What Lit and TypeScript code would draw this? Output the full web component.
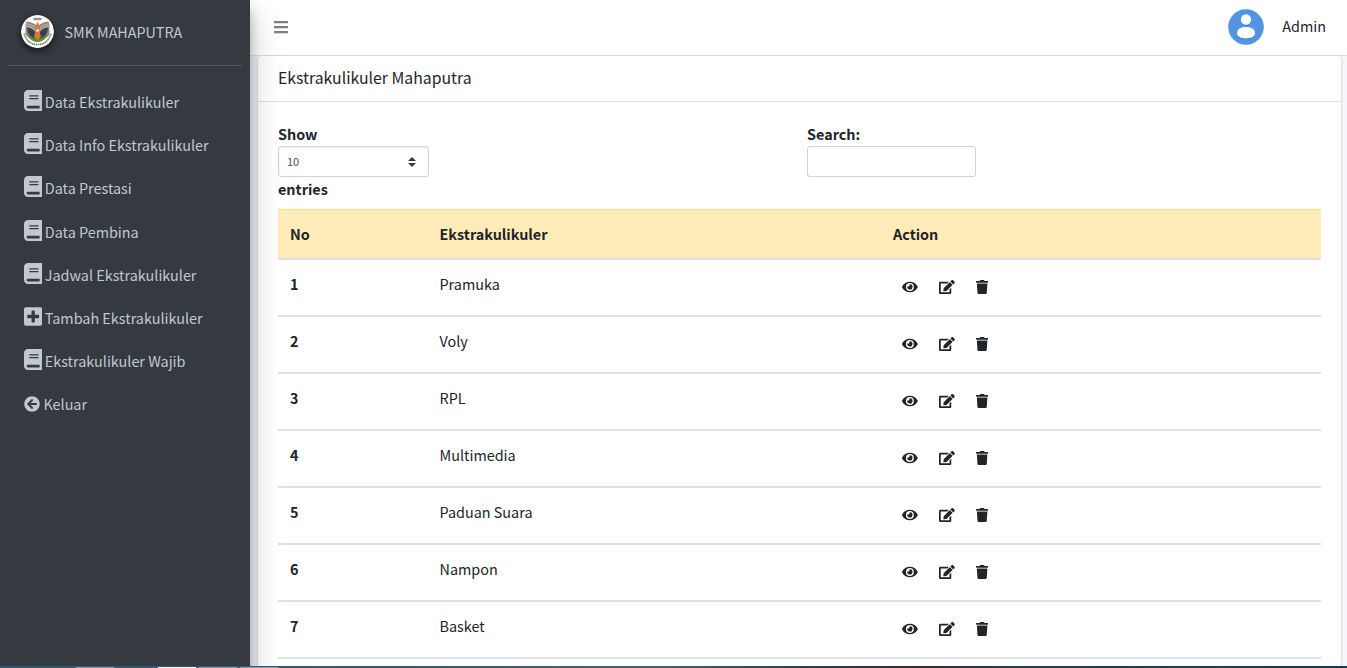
import { LitElement, html, css, svg } from "lit";
import { customElement, property } from "lit/decorators.js";

type Glyph = { w: number; d: string };

const GLYPHS: Record<string, Glyph> = {
  book: { w: 448, d: "M448 360V24c0-13.3-10.7-24-24-24H96C43 0 0 43 0 96v320c0 53 43 96 96 96h328c13.3 0 24-10.7 24-24v-16c0-7.5-3.5-14.3-8.9-18.7-4.2-15.4-4.2-59.3 0-74.7 5.4-4.3 8.9-11.1 8.9-18.6zM128 134c0-3.3 2.7-6 6-6h212c3.3 0 6 2.7 6 6v20c0 3.3-2.7 6-6 6H134c-3.3 0-6-2.7-6-6v-20zm0 64c0-3.3 2.7-6 6-6h212c3.3 0 6 2.7 6 6v20c0 3.3-2.7 6-6 6H134c-3.3 0-6-2.7-6-6v-20zm253.4 250H96c-17.7 0-32-14.3-32-32 0-17.6 14.4-32 32-32h285.4c-1.9 17.1-1.9 46.9 0 64z" },
  plus: { w: 448, d: "M400 32H48C21.5 32 0 53.5 0 80v352c0 26.5 21.5 48 48 48h352c26.5 0 48-21.5 48-48V80c0-26.5-21.5-48-48-48zm-32 252c0 6.6-5.4 12-12 12h-92v92c0 6.6-5.4 12-12 12h-56c-6.6 0-12-5.4-12-12v-92H92c-6.6 0-12-5.4-12-12v-56c0-6.6 5.4-12 12-12h92v-92c0-6.6 5.4-12 12-12h56c6.6 0 12 5.4 12 12v92h92c6.6 0 12 5.4 12 12v56z" },
  back: { w: 512, d: "M256 504C119 504 8 393 8 256S119 8 256 8s248 111 248 248-111 248-248 248zm28.9-143.6L209.4 288H392c13.3 0 24-10.7 24-24v-16c0-13.3-10.7-24-24-24H209.4l75.5-72.4c9.7-9.3 9.9-24.8.4-34.3l-11-10.9c-9.4-9.4-24.6-9.4-33.9 0L107.7 239c-9.4 9.4-9.4 24.6 0 33.9l132.7 132.7c9.4 9.4 24.6 9.4 33.9 0l11-10.9c9.5-9.5 9.3-25-.4-34.3z" },
  bars: { w: 448, d: "M16 132h416c8.8 0 16-7.2 16-16V76c0-8.8-7.2-16-16-16H16C7.2 60 0 67.2 0 76v40c0 8.8 7.2 16 16 16zm0 160h416c8.8 0 16-7.2 16-16v-40c0-8.8-7.2-16-16-16H16c-8.8 0-16 7.2-16 16v40c0 8.8 7.2 16 16 16zm0 160h416c8.8 0 16-7.2 16-16v-40c0-8.8-7.2-16-16-16H16c-8.8 0-16 7.2-16 16v40c0 8.8 7.2 16 16 16z" },
  eye: { w: 576, d: "M572.52 241.4C518.29 135.59 410.93 64 288 64S57.68 135.64 3.48 241.41a32.35 32.35 0 0 0 0 29.19C57.71 376.41 165.07 448 288 448s230.32-71.64 284.52-177.41a32.35 32.35 0 0 0 0-29.19zM288 400a144 144 0 1 1 144-144 143.93 143.93 0 0 1-144 144zm0-240a95.31 95.31 0 0 0-25.31 3.79 47.85 47.85 0 0 1-66.9 66.9A95.78 95.78 0 1 0 288 160z" },
  edit: { w: 576, d: "M402.6 83.2l90.2 90.2c3.8 3.8 3.8 10 0 13.8L274.4 405.6l-92.8 10.3c-12.4 1.4-22.9-9.1-21.5-21.5l10.3-92.8L388.8 83.2c3.8-3.8 10-3.8 13.8 0zm162-22.9l-48.8-48.8c-15.2-15.2-39.9-15.2-55.2 0l-35.4 35.4c-3.8 3.8-3.8 10 0 13.8l90.2 90.2c3.8 3.8 10 3.8 13.8 0l35.4-35.4c15.2-15.3 15.2-40 0-55.2zM384 346.2V448H64V128h229.8c3.2 0 6.2-1.3 8.5-3.5l40-40c7.6-7.6 2.2-20.5-8.5-20.5H48C21.5 64 0 85.5 0 112v352c0 26.5 21.5 48 48 48h352c26.5 0 48-21.5 48-48V306.2c0-10.7-12.9-16-20.5-8.5l-40 40c-2.2 2.3-3.5 5.3-3.5 8.5z" },
  trash: { w: 448, d: "M432 32H312l-9.4-18.7A24 24 0 0 0 281.1 0H166.8a23.72 23.72 0 0 0-21.4 13.3L136 32H16A16 16 0 0 0 0 48v32a16 16 0 0 0 16 16h416a16 16 0 0 0 16-16V48a16 16 0 0 0-16-16zM53.2 467a48 48 0 0 0 47.9 45h245.8a48 48 0 0 0 47.9-45L416 128H32z" },
};

@customElement("fa-icon")
class FaIcon extends LitElement {
  @property() name = "book";
  @property({ type: Number }) size = 16;
  static styles = css`
    :host { display: inline-flex; flex: none; }
    svg { display: block; fill: currentColor; }
  `;
  render() {
    const g = GLYPHS[this.name];
    return html`<svg width=${(this.size * g.w) / 512} height=${this.size} viewBox="0 0 ${g.w} 512">
      ${svg`<path d=${g.d}></path>`}
    </svg>`;
  }
}

const MENU: [string, string][] = [
  ["book", "Data Ekstrakulikuler"],
  ["book", "Data Info Ekstrakulikuler"],
  ["book", "Data Prestasi"],
  ["book", "Data Pembina"],
  ["book", "Jadwal Ekstrakulikuler"],
  ["plus", "Tambah Ekstrakulikuler"],
  ["book", "Ekstrakulikuler Wajib"],
  ["back", "Keluar"],
];

const ROWS = ["Pramuka", "Voly", "RPL", "Multimedia", "Paduan Suara", "Nampon", "Basket"];

@customElement("app-root")
class AppRoot extends LitElement {
  static styles = css`
    :host {
      display: block;
      height: 668px;
      overflow: hidden;
      position: relative;
      font-family: "Source Sans Pro", "Noto Sans CJK JP", "Noto Sans", sans-serif;
      font-size: 14.4px;
      line-height: 24px;
      color: #212529;
      background: #f4f6f9;
    }
    * { box-sizing: border-box; }
    .shell { display: grid; grid-template-columns: 250px 1fr; height: 668px; }
    .side {
      background: #343a40;
      color: #c2c7d0;
      padding: 0 8px;
      z-index: 2;
      box-shadow: 0 14px 28px rgba(0, 0, 0, 0.25), 0 10px 10px rgba(0, 0, 0, 0.22);
    }
    .brand {
      display: flex;
      align-items: center;
      height: 66px;
      padding: 0 0 2px 13px;
      border-bottom: 1px solid #4f5962;
      font-size: 14.3px;
    }
    .logo {
      width: 33px;
      height: 33px;
      border-radius: 50%;
      margin-right: 10.5px;
      box-shadow: 0 3px 6px rgba(0, 0, 0, 0.3), 0 3px 6px rgba(0, 0, 0, 0.3);
    }
    .menu { display: flex; flex-direction: column; padding-top: 15px; }
    .item { display: flex; align-items: center; height: 43.2px; padding-left: 16px; white-space: pre; }
    .item span { padding-bottom: 1px; }
    .item fa-icon { margin: 0 2.4px 4px 0; }
    .item fa-icon.back { margin: 0 3.4px 1px 0; }
    .main { display: flex; flex-direction: column; min-width: 0; }
    .top {
      display: flex;
      align-items: center;
      height: 56px;
      flex: none;
      padding: 0 21px 1px 24px;
      background: #fff;
      border-bottom: 1px solid #dee2e6;
    }
    .top .bars { color: rgba(0, 0, 0, 0.5); }
    .user { display: flex; align-items: center; gap: 18px; margin-left: auto; }
    .user span { padding-bottom: 2px; }
    .card {
      margin: 0 6px 0 8px;
      flex: 1;
      background: #fff;
      border-radius: 4px 4px 0 0;
      box-shadow: 0 0 1px rgba(0, 0, 0, 0.125), 0 1px 3px rgba(0, 0, 0, 0.2);
    }
    .head { height: 46px; padding: 10px 20px; border-bottom: 1px solid #dfdfdf; font-size: 15.8px; }
    .body { padding: 20px; }
    .filters { display: grid; grid-template-columns: 529px 1fr; height: 87px; font-weight: 700; }
    .filters > div { display: flex; flex-direction: column; }
    .select, .input {
      display: flex;
      align-items: center;
      height: 31px;
      border: 1px solid #ced4da;
      border-radius: 3px;
      background: #fff;
    }
    .select {
      width: 151px;
      justify-content: space-between;
      padding: 0 11px 0 8px;
      font-size: 11px;
      font-weight: 400;
      color: #495057;
      box-shadow: inset 0 1px 2px rgba(0, 0, 0, 0.075);
    }
    .select span { padding-bottom: 2px; }
    .input { width: 169px; }
    .row { display: grid; grid-template-columns: 149.5px 453.5px 1fr; height: 57px; border-bottom: 2px solid #dee2e6; padding: 12px 12px; }
    .row b { font-weight: 700; }
    .row.th { height: 51px; background: #ffecb9; border-top: 1px solid #ffdf7e; font-weight: 700; }
    .acts { display: flex; padding: 8px 0 0 9px; }
    .acts fa-icon:nth-child(2) { margin: 0 21px; }
    .strip {
      position: absolute;
      z-index: 3;
      left: 0;
      bottom: 0;
      width: 100%;
      height: 2px;
      background: linear-gradient(90deg, #315b70, #34596a 30%, #4a6069 48%, #2c4050 60%, #3b2d33 68%, #24414f 76%, #163c4d);
    }
    .tab { position: absolute; top: 1px; height: 1px; width: 38px; background: #8b9ba8; }
    .t1 { left: 76px; }
    .t2 { left: 158px; background: #fff; }
    .t3 { left: 199px; }
    .t4 { left: 240px; }
  `;

  private crest() {
    return html`<svg class="logo" viewBox="0 0 33 33">
      <circle cx="16.5" cy="16.5" r="16.5" fill="#fff" />
      <path d="M12.500 2.800h8v2.400h-8z" fill="#98917f" />
      <path d="M5.500 6.500Q13 7 16.500 12 20 7 27.500 6.500L28.500 9v10q-2 4-8 6h-8q-6-2-8-6V9z" fill="#8b867a" />
      <path d="M5 8.800q7.500.5 11 6M28 8.800q-7.500.5-11 6M5 11q7 .5 11 6M28 11q-7 .5-11 6" fill="none" stroke="#dedace" stroke-width=".7" />
      <path d="M6 12.500q6.500 1 8.500 5.500v6.500Q6.500 22 6 12.500zM27 12.500q-6.500 1-8.500 5.500v6.500q8-2.500 8.500-12z" fill="#3a4050" />
      <path d="M16.500 6.500l2.600 6-.6 4 1.500 5-3.500 4-3.500-4 1.500-5-.6-4z" fill="#d9783a" />
      <circle cx="16.500" cy="15.500" r="1.400" fill="#f6dcc0" />
      <path d="M7 20.500q5 1 9.500 4.500 4.500-3.500 9.500-4.500-2.500 6.500-9.500 6.500T7 20.500z" fill="#51942c" />
      <path d="M3.200 18.500q2.800 11 13.300 11t13.300-11" fill="none" stroke="#77766b" stroke-width="1.700" stroke-dasharray="1.300 .6" />
    </svg>`;
  }

  private avatar() {
    return html`<svg width="36" height="36" viewBox="0 0 36 36">
      <circle cx="18" cy="18" r="17.8" fill="#5294e2" />
      <circle cx="18" cy="11.2" r="5.3" fill="#3f78bd" />
      <path d="M9 25.200c0-5 4-6.800 9-6.800s9 1.800 9 6.800c0 3-4 4.900-9 4.900s-9-1.900-9-4.900z" fill="#3f78bd" />
      <circle cx="18" cy="10.500" r="5.200" fill="#fff" />
      <path d="M9 24.500c0-5 4-6.500 9-6.500s9 1.500 9 6.500c0 3-4 4.900-9 4.900s-9-1.900-9-4.900z" fill="#fff" />
    </svg>`;
  }

  render() {
    return html`
      <div class="shell">
        <aside class="side">
          <div class="brand">${this.crest()}<span>SMK MAHAPUTRA</span></div>
          <nav class="menu">
            ${MENU.map(
              ([icon, label]) => html`<div class="item">
                <fa-icon class=${icon} name=${icon} size=${icon === "back" ? 16 : 21}></fa-icon><span>${label}</span>
              </div>`
            )}
          </nav>
        </aside>
        <main class="main">
          <header class="top">
            <fa-icon class="bars" name="bars" size="16"></fa-icon>
            <div class="user">${this.avatar()}<span>Admin</span></div>
          </header>
          <section class="card">
            <div class="head">Ekstrakulikuler Mahaputra</div>
            <div class="body">
              <div class="filters">
                <div>
                  <span>Show</span>
                  <div class="select">
                    <span>10</span>
                    <svg width="10" height="12" viewBox="0 0 10 12"><path d="M5 1l4 4H1zM5 11l4-4H1z" fill="#343a40" /></svg>
                  </div>
                  <span>entries</span>
                </div>
                <div><span>Search:</span><div class="input"></div></div>
              </div>
              <div class="row th"><span>No</span><span>Ekstrakulikuler</span><span>Action</span></div>
              ${ROWS.map(
                (name, i) => html`<div class="row">
                  <b>${i + 1}</b><span>${name}</span>
                  <div class="acts">
                    <fa-icon name="eye" size="14"></fa-icon>
                    <fa-icon name="edit" size="14"></fa-icon>
                    <fa-icon name="trash" size="14"></fa-icon>
                  </div>
                </div>`
              )}
            </div>
          </section>
        </main>
      </div>
      <div class="strip"><i class="tab t1"></i><i class="tab t2"></i><i class="tab t3"></i><i class="tab t4"></i></div>
    `;
  }
}
